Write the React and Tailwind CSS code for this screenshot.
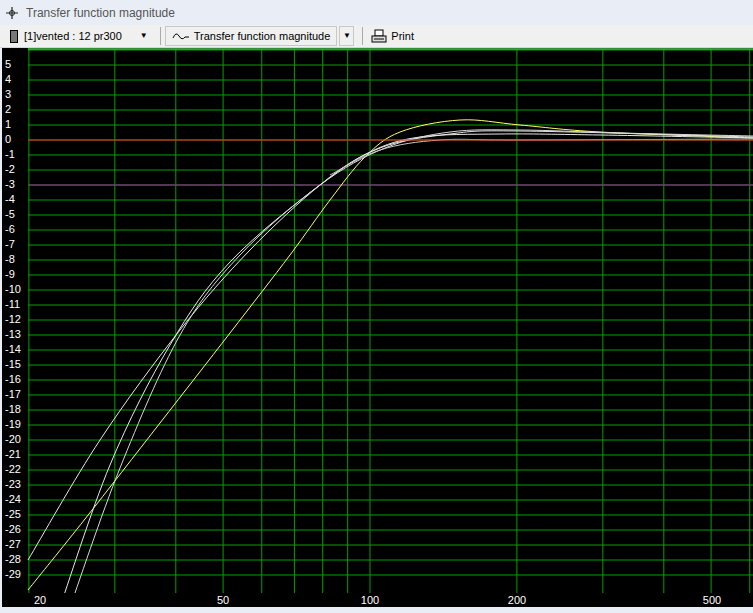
import React from 'react';

const FREQS = [20, 30, 40, 50, 60, 70, 80, 90, 100, 200, 300, 400, 500, 600];
const fx = (f) => 370 + 488 * Math.log10(f / 100);
const dy = (d) => 140 - 15 * d;

// catmull-rom to bezier
const smooth = (pts) => {
  let d = `M${pts[0][0]},${pts[0][1]}`;
  for (let i = 0; i < pts.length - 1; i++) {
    const p0 = pts[i - 1] || pts[i];
    const p1 = pts[i];
    const p2 = pts[i + 1];
    const p3 = pts[i + 2] || p2;
    const c1 = [p1[0] + (p2[0] - p0[0]) / 6, p1[1] + (p2[1] - p0[1]) / 6];
    const c2 = [p2[0] - (p3[0] - p1[0]) / 6, p2[1] - (p3[1] - p1[1]) / 6];
    d += ` C${c1[0]},${c1[1]} ${c2[0]},${c2[1]} ${p2[0]},${p2[1]}`;
  }
  return d;
};

const curves = [
  { c: '#ffff66', pts: [[28, 590], [85, 519], [160, 423], [230, 333], [290, 255], [330, 200], [365, 157], [400, 132], [460, 120], [520, 125], [600, 132], [753, 138]] },
  { c: '#e8e8e8', pts: [[28, 560], [100, 440], [180, 330], [250, 250], [320, 185], [370, 152], [420, 137], [500, 134], [600, 135], [753, 138]] },
  { c: '#e8e8e8', pts: [[58, 613], [110, 465], [170, 345], [230, 262], [320, 185], [380, 148], [450, 134], [520, 131], [753, 137]] },
  { c: '#d8d8d8', pts: [[68, 613], [120, 468], [180, 335], [240, 255], [320, 185], [385, 148], [450, 132], [520, 130], [620, 133], [753, 136]] },
  { c: '#c8c8c8', pts: [[330, 175], [380, 150], [440, 140], [520, 140], [753, 139]] },
];

const dbs = [];
for (let d = 5; d >= -29; d--) dbs.push(d);

export default function App() {
  return (
    <div className="w-[753px] h-[613px] bg-[#e9eef6] overflow-hidden" style={{ fontFamily: '"Liberation Sans", Arial, sans-serif' }}>
      <div className="h-[25px] flex items-center gap-2 px-1.5 text-[12px] text-[#555]">
        <svg width="12" height="12" viewBox="0 0 12 12"><path d="M6 0v12M0 6h12" stroke="#222" strokeWidth="1.2" /><circle cx="6" cy="6" r="2.5" fill="none" stroke="#222" /></svg>
        <span>Transfer function magnitude</span>
      </div>
      <div className="h-[23px] flex items-center text-[11px] text-black bg-[#f0f0f0] border-b border-[#cfd6df]">
        <div className="flex items-center gap-1.5 pl-2.5 pr-2 h-full">
          <span className="w-[8px] h-[13px] bg-[#777] border border-black" />
          <span>[1]vented : 12 pr300</span>
          <span className="ml-3 text-[8px]">▼</span>
        </div>
        <div className="w-px h-[18px] bg-[#aaa] mx-1" />
        <div className="flex items-center gap-1 px-1.5 h-[20px] border border-[#c8c8c8]">
          <svg width="18" height="10" viewBox="0 0 18 10"><path d="M1 7 Q4 0 7 5 Q10 10 13 6 L17 6" fill="none" stroke="#000" /></svg>
          <span>Transfer function magnitude</span>
        </div>
        <div className="flex items-center justify-center w-[15px] h-[20px] border border-[#c8c8c8] ml-0.5 text-[8px]">▼</div>
        <div className="w-px h-[18px] bg-[#aaa] mx-2" />
        <div className="flex items-center gap-1">
          <svg width="16" height="15" viewBox="0 0 16 15"><rect x="4" y="1" width="8" height="6" fill="#fff" stroke="#000" /><rect x="1" y="7" width="14" height="6" fill="#ddd" stroke="#000" /><path d="M3 10h10" stroke="#000" /></svg>
          <span>Print</span>
        </div>
      </div>
      <div className="relative ml-[2px] w-[751px] h-[559px] bg-black">
        <svg className="absolute left-0 top-0" width="751" height="559" viewBox="2 48 751 559">
          <rect x="28" y="48" width="725" height="545" fill="#000" />
          {dbs.concat([6]).map((d) => (
            <line key={d} x1="28" x2="753" y1={dy(d)} y2={dy(d)} stroke="#00a000" strokeWidth="1" />
          ))}
          {FREQS.map((f) => (
            <line key={f} x1={fx(f)} x2={fx(f)} y1="49" y2="593" stroke="#00a000" strokeWidth="1" />
          ))}
          <line x1="28" x2="753" y1="49" y2="49" stroke="#40c040" strokeWidth="1.5" />
          <line x1="28" x2="753" y1="185" y2="185" stroke="#a020a0" />
          {curves.map((c, i) => (
            <path key={i} d={smooth(c.pts)} fill="none" stroke={c.c} strokeWidth="1" />
          ))}
          <line x1="28" x2="753" y1="140" y2="140" stroke="#ff2020" />
          <rect x="2" y="593" width="751" height="14" fill="#000" />
        </svg>
        {dbs.map((d) => (
          <span key={d} className="absolute left-[3px] text-[11px] leading-none text-white" style={{ top: dy(d) - 48 - 6 }}>{d}</span>
        ))}
        {[[20, 40], [50, 223], [100, 370], [200, 517], [500, 712]].map(([l, x]) => (
          <span key={l} className="absolute text-[11px] leading-none text-white -translate-x-1/2" style={{ left: x - 2, top: 547 }}>{l}</span>
        ))}
      </div>
    </div>
  );
}
